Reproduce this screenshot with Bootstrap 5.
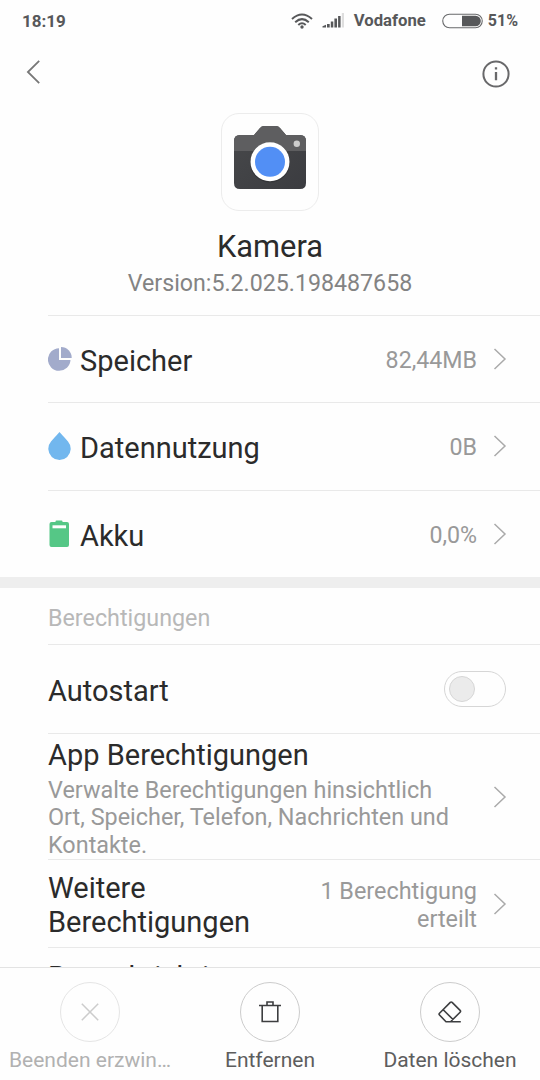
<!DOCTYPE html>
<html lang="de">
<head>
<meta charset="utf-8">
<meta name="viewport" content="width=device-width, initial-scale=1">
<title>App-Info</title>
<link href="https://cdn.jsdelivr.net/npm/bootstrap@5.3.0/dist/css/bootstrap.min.css" rel="stylesheet">
<style>
body{font-family:Roboto,sans-serif;color:#2b2b2b;background:#fefefe;font-size:29px;line-height:34px}
svg{display:block;flex:none}
.screen{height:1080px}
.status{height:40px;padding:1px 22px 0;font-size:16.7px;font-weight:700;line-height:40px;color:#57585a}
.clock{font-size:17px}
.carrier{margin-left:9px}
.battery{margin-left:16px}
.percent{margin-left:4px;font-size:16px}
.topbar{height:67px;padding:8px 30px 0 26px}
.topbar svg{margin-top:12px}
.app-tile{width:98px;height:98px;border:1px solid #ececec;border-radius:18px;margin-top:6px}
.app-name{margin-top:19px;font-size:30.8px}
.version{font-size:23.2px;line-height:28px;color:#838383;margin-top:5px}
.settings{margin-top:17.6px;min-height:0}
.item{margin-left:48px;padding-right:33px;border-top:1px solid #e9e9e9}
.item-icon{width:32px}
.sub{font-size:23.4px;line-height:27.5px;color:#999}
.chev{margin-left:16px}
.usage{height:87.5px}
.usage .label{padding-top:4px}
.usage .sub{font-size:23.2px;padding-top:3px}
.autostart{height:89px;padding-right:34px}
.autostart .label{padding-top:4px}
.perms{height:126px}
.perm-text{padding-top:4px}
.perm-name{margin-bottom:5px}
.more{height:88px}
.more .label{padding-top:2px}
.more .sub{padding-top:4px}
.notify{padding-top:12px}
.band{height:11px;background:#eee}
.section-name{margin-left:48px;height:56px;padding-top:3px;line-height:54px;font-size:23.3px;color:#b8b8b8}
.switch{width:62px;height:36px;border:1px solid #d6d6d6;border-radius:18px;padding-left:4px}
.knob{width:26px;height:26px;border-radius:50%;background:#ebebeb;border:1px solid #d6d6d6}
.actions{height:113px;border-top:1px solid #e3e3e3;background:#fefefe;font-size:21px;line-height:26px;color:#5d5d5d}
.ring{width:60px;height:60px;border:1px solid #ccc;border-radius:50%;margin-top:14px;margin-bottom:5px}
.off{color:#b1b1b1}
.off .ring{border-color:#e5e5e5}
</style>
</head>
<body>
<div class="screen d-flex flex-column overflow-hidden">
  <div class="status d-flex align-items-center flex-shrink-0">
    <span class="clock me-auto">18:19</span>
    <svg width="22" height="16" viewBox="0 0 22 16" fill="none" stroke="#57585a" stroke-width="2"><path d="M1 6Q11-3 21 6M4.200 9.200Q11 3 17.800 9.200M7.300 12Q11 8.500 14.700 12"/><circle cx="11" cy="14" r="1.700" fill="#57585a" stroke="none"/></svg>
    <svg class="ms-2" width="24" height="15" viewBox="0 0 24 15"><path fill="#57585a" d="M1.500 13.200l3.500-1.500v2.800H1.500zM6 11h2.700v3.500H6zM9.800 8.500h2.500v6H9.800zM13.400 5.500h2.600v9h-2.600zM17.100 3h2.500v11.500h-2.500z"/><path fill="#dedede" d="M20.800 0H23v14.500h-2.200z"/></svg>
    <span class="carrier">Vodafone</span>
    <svg class="battery" width="42" height="16" viewBox="0 0 42 16"><rect x=".75" y="1.250" width="39.500" height="13.500" rx="6.750" fill="none" stroke="#68696b" stroke-width="1.100"/><path fill="#57585a" d="M20 2.700h13.500a5.300 5.300 0 0 1 0 10.600H20z"/></svg>
    <span class="percent">51%</span>
  </div>
  <div class="topbar d-flex align-items-start justify-content-between flex-shrink-0">
    <svg width="16" height="24" viewBox="0 0 16 24" fill="none" stroke="#777" stroke-width="1.800"><path d="M13.200.900 1.900 12l11.300 11.100"/></svg>
    <svg width="28" height="28" viewBox="0 0 28 28" fill="none" stroke="#68686a" stroke-width="2"><circle cx="14" cy="14" r="12.600"/><path d="M14 12v8.300M14 7.300v2.200" stroke-width="2.300"/></svg>
  </div>
  <div class="text-center flex-shrink-0">
    <div class="app-tile mx-auto d-flex justify-content-center">
      <svg width="74" height="68" viewBox="0 0 74 68" class="mt-2">
        <defs><linearGradient id="g" x2="1" y2="1"><stop stop-color="#48494b"/><stop offset="1" stop-color="#3b3c40"/></linearGradient><clipPath id="c"><path d="M7 13h14l6-7q1.500-2 4-2h12q2.500 0 4 2l6 7h14q6 0 6 6v42q0 6-6 6H7q-6 0-6-6V19q0-6 6-6z"/></clipPath></defs>
        <g clip-path="url(#c)"><path fill="url(#g)" d="M0 0h74v67H0z"/><path fill="#5e5e60" d="M0 0h74v29H0z"/></g>
        <circle cx="37" cy="40.500" r="20" fill="#343538"/><circle cx="37" cy="39.800" r="19.500" fill="#fff"/><circle cx="37" cy="39.800" r="15" fill="#528ff5"/><circle cx="63.800" cy="21.700" r="3.200" fill="#ccc"/>
      </svg>
    </div>
    <div class="app-name">Kamera</div>
    <div class="version">Version:5.2.025.198487658</div>
  </div>
  <div class="settings flex-fill overflow-hidden">
    <div class="item usage d-flex align-items-center">
      <div class="item-icon"><svg width="24" height="26" viewBox="0 0 24 26" fill="#a2abcb"><path d="M11 2.200V14h11.500A11.300 11.300 0 1 1 11 2.200z"/><path d="M13 1a10.800 10.800 0 0 1 10.700 11H13z"/></svg></div>
      <div class="label">Speicher</div><div class="sub ms-auto">82,44MB</div>
      <svg class="chev" width="14" height="22" viewBox="0 0 14 22" fill="none" stroke="#aaa" stroke-width="1.500"><path d="M1.500 1l10.500 10-10.500 10"/></svg>
    </div>
    <div class="item usage d-flex align-items-center">
      <div class="item-icon"><svg width="24" height="28" viewBox="0 0 24 28" fill="#72b7ee"><path d="M11.500 0Q13 1.500 20 9.500A11.200 11.200 0 1 1 3 9.500Q10 1.500 11.500 0z"/></svg></div>
      <div class="label">Datennutzung</div><div class="sub ms-auto">0B</div>
      <svg class="chev" width="14" height="22" viewBox="0 0 14 22" fill="none" stroke="#aaa" stroke-width="1.500"><path d="M1.500 1l10.500 10-10.500 10"/></svg>
    </div>
    <div class="item usage d-flex align-items-center">
      <div class="item-icon"><svg width="24" height="28" viewBox="0 0 24 28"><path fill="#55c786" d="M7.500 2V1.500Q7.500.5 8.500.5h5q1 0 1 1V2h4.500q2 0 2 2v21q0 2-2 2H3.500q-2 0-2-2V4q0-2 2-2z"/><path fill="#fff" d="M4.500 5.300h13.500v3H4.500z"/></svg></div>
      <div class="label">Akku</div><div class="sub ms-auto">0,0%</div>
      <svg class="chev" width="14" height="22" viewBox="0 0 14 22" fill="none" stroke="#aaa" stroke-width="1.500"><path d="M1.500 1l10.500 10-10.500 10"/></svg>
    </div>
    <div class="band"></div>
    <div class="section-name">Berechtigungen</div>
    <div class="item autostart d-flex align-items-center justify-content-between">
      <div class="label">Autostart</div>
      <div class="switch d-flex align-items-center"><div class="knob"></div></div>
    </div>
    <div class="item perms d-flex align-items-center justify-content-between">
      <div class="perm-text"><div class="perm-name">App Berechtigungen</div><div class="sub">Verwalte Berechtigungen hinsichtlich<br>Ort, Speicher, Telefon, Nachrichten und<br>Kontakte.</div></div>
      <svg class="chev" width="14" height="22" viewBox="0 0 14 22" fill="none" stroke="#aaa" stroke-width="1.500"><path d="M1.500 1l10.500 10-10.500 10"/></svg>
    </div>
    <div class="item more d-flex align-items-center">
      <div class="label">Weitere<br>Berechtigungen</div><div class="sub ms-auto text-end">1 Berechtigung<br>erteilt</div>
      <svg class="chev" width="14" height="22" viewBox="0 0 14 22" fill="none" stroke="#aaa" stroke-width="1.500"><path d="M1.500 1l10.500 10-10.500 10"/></svg>
    </div>
    <div class="item notify">Benachrichtigungen</div>
  </div>
  <div class="actions row g-0 text-center flex-shrink-0">
    <div class="col-4 off"><div class="ring mx-auto d-flex align-items-center justify-content-center"><svg width="20" height="20" viewBox="0 0 20 20" stroke="#ccc" stroke-width="1.500"><path d="M1.800 1.800l16.400 16.400M18.200 1.800 1.800 18.200"/></svg></div>Beenden erzwin…</div>
    <div class="col-4"><div class="ring mx-auto d-flex align-items-center justify-content-center"><svg width="24" height="24" viewBox="0 0 24 24" fill="none" stroke="#3d3e40" stroke-width="1.600"><path d="M1 5.500h22M4.200 5.500v16h15.600v-16M9 5V2h6v3"/></svg></div>Entfernen</div>
    <div class="col-4"><div class="ring mx-auto d-flex align-items-center justify-content-center"><svg width="24" height="24" viewBox="0 0 24 24" fill="none" stroke="#3d3e40" stroke-width="1.600" stroke-linejoin="round"><path d="M22.800 21.700H8L1.500 15q-.9-.9 0-1.800L12.300 2.400q.9-.9 1.800 0l8 8q.9.900 0 1.800L13 21.300M5.200 9.700 15 19.500"/></svg></div>Daten löschen</div>
  </div>
</div>
<script src="https://cdn.jsdelivr.net/npm/bootstrap@5.3.0/dist/js/bootstrap.bundle.min.js"></script>
</body>
</html>
